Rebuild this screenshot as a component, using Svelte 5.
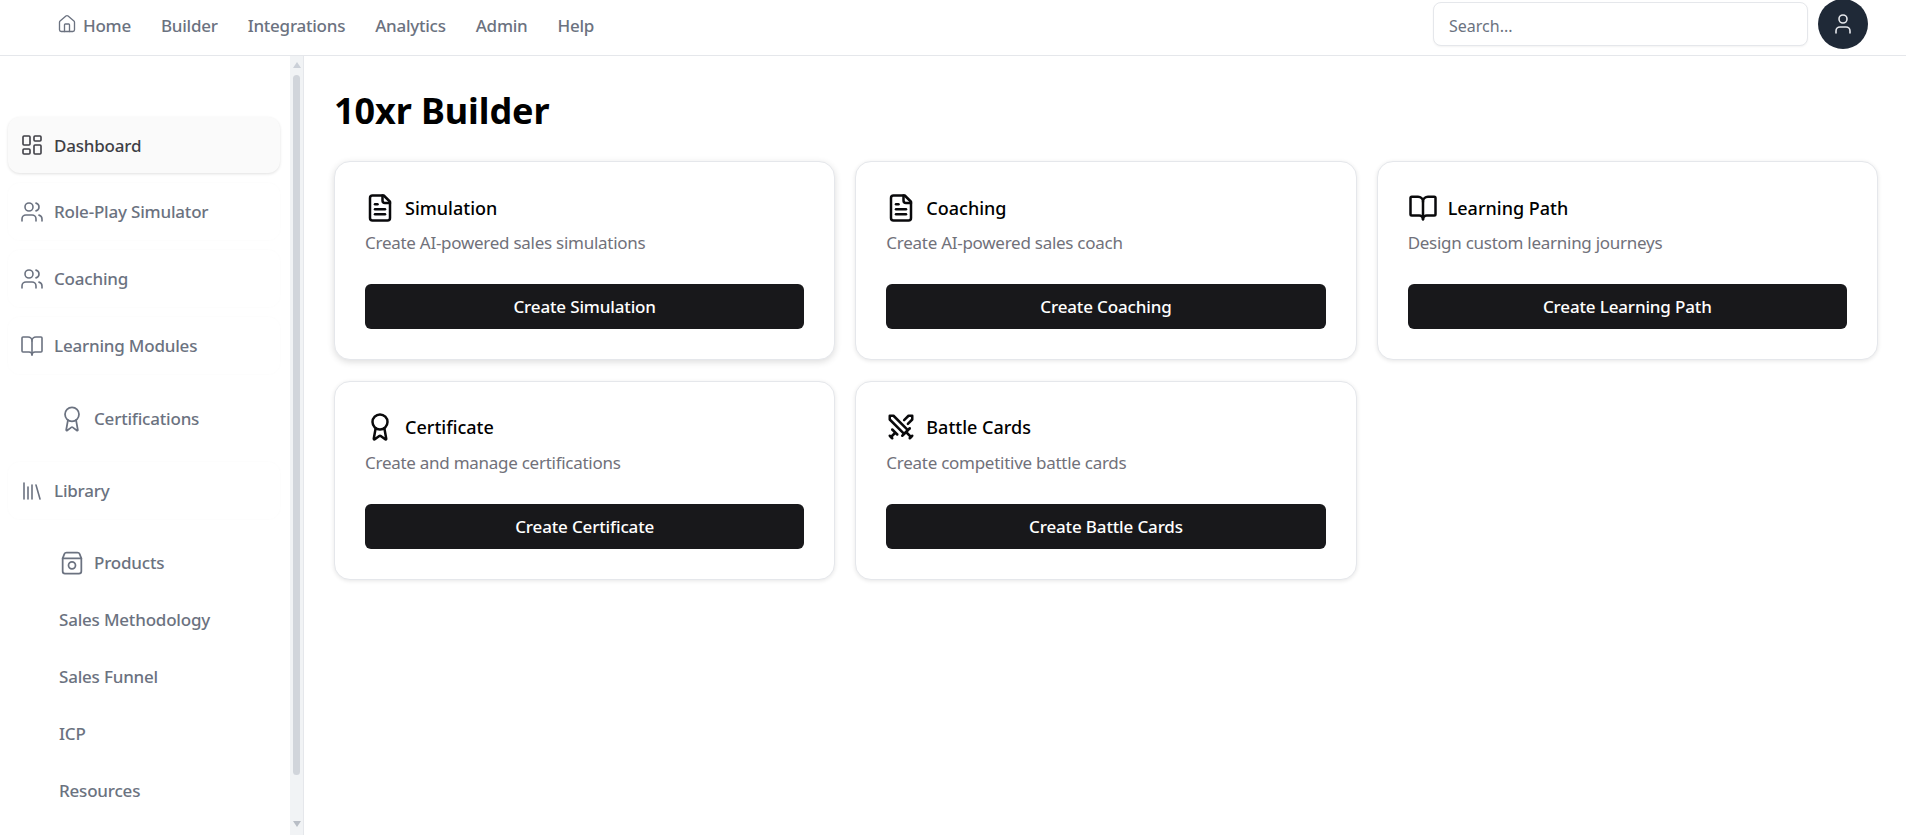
<script>
  const icons = {
    home: ['M15 21v-8a1 1 0 0 0-1-1h-4a1 1 0 0 0-1 1v8', 'M3 10a2 2 0 0 1 .709-1.528l7-5.999a2 2 0 0 1 2.582 0l7 5.999A2 2 0 0 1 21 10v9a2 2 0 0 1-2 2H5a2 2 0 0 1-2-2z'],
    user: ['M19 21v-2a4 4 0 0 0-4-4H9a4 4 0 0 0-4 4v2', 'M16 7a4 4 0 1 1-8 0 4 4 0 0 1 8 0z'],
    dashboard: ['M4 3h5a1 1 0 0 1 1 1v7a1 1 0 0 1-1 1H4a1 1 0 0 1-1-1V4a1 1 0 0 1 1-1z', 'M15 3h5a1 1 0 0 1 1 1v3a1 1 0 0 1-1 1h-5a1 1 0 0 1-1-1V4a1 1 0 0 1 1-1z', 'M15 12h5a1 1 0 0 1 1 1v7a1 1 0 0 1-1 1h-5a1 1 0 0 1-1-1v-7a1 1 0 0 1 1-1z', 'M4 16h5a1 1 0 0 1 1 1v3a1 1 0 0 1-1 1H4a1 1 0 0 1-1-1v-3a1 1 0 0 1 1-1z'],
    users: ['M16 21v-2a4 4 0 0 0-4-4H6a4 4 0 0 0-4 4v2', 'M13 7a4 4 0 1 1-8 0 4 4 0 0 1 8 0z', 'M22 21v-2a4 4 0 0 0-3-3.87', 'M16 3.13a4 4 0 0 1 0 7.75'],
    book: ['M12 7v14', 'M3 18a1 1 0 0 1-1-1V4a1 1 0 0 1 1-1h5a4 4 0 0 1 4 4 4 4 0 0 1 4-4h5a1 1 0 0 1 1 1v13a1 1 0 0 1-1 1h-6a3 3 0 0 0-3 3 3 3 0 0 0-3-3z'],
    award: ['m15.477 12.89 1.515 8.526a.5.5 0 0 1-.81.47l-3.58-2.687a1 1 0 0 0-1.197 0l-3.586 2.686a.5.5 0 0 1-.81-.469l1.514-8.526', 'M18 8a6 6 0 1 1-12 0 6 6 0 0 1 12 0z'],
    library: ['m16 6 4 14', 'M12 6v14', 'M8 8v12', 'M4 4v16'],
    box: ['M4 8l1.4-3.6A2.2 2.2 0 0 1 7.4 3h9.2a2.2 2.2 0 0 1 2 1.4L20 8v11a2 2 0 0 1-2 2H6a2 2 0 0 1-2-2z', 'M4 8h16', 'M15 14a3 3 0 1 1-6 0 3 3 0 0 1 6 0z'],
    file: ['M15 2H6a2 2 0 0 0-2 2v16a2 2 0 0 0 2 2h12a2 2 0 0 0 2-2V7z', 'M14 2v4a2 2 0 0 0 2 2h4', 'M10 9H8', 'M16 13H8', 'M16 17H8'],
    swords: ['M14.5 17.5 3 6V3h3l11.5 11.5', 'm13 19 6-6', 'm16 16 4 4', 'm19 21 2-2', 'M14.5 6.5 18 3h3v3l-3.5 3.5', 'm5 14 4 4', 'm7 17-3 3', 'm3 19 2 2']
  };

  const sideGroups = [
    { label: 'Dashboard', icon: 'dashboard', kind: 'card active' },
    { label: 'Role-Play Simulator', icon: 'users', kind: 'card' },
    { label: 'Coaching', icon: 'users', kind: 'card' },
    { label: 'Learning Modules', icon: 'book', kind: 'card' },
    { label: 'Certifications', icon: 'award', kind: 'sub' },
    { label: 'Library', icon: 'library', kind: 'card' },
    { label: 'Products', icon: 'box', kind: 'sub' },
    { label: 'Sales Methodology', kind: 'plain' },
    { label: 'Sales Funnel', kind: 'plain' },
    { label: 'ICP', kind: 'plain' },
    { label: 'Resources', kind: 'plain' }
  ];

  const cards = [
    { title: 'Simulation', desc: 'Create AI-powered sales simulations', btn: 'Create Simulation', icon: 'file', hover: true },
    { title: 'Coaching', desc: 'Create AI-powered sales coach', btn: 'Create Coaching', icon: 'file' },
    { title: 'Learning Path', desc: 'Design custom learning journeys', btn: 'Create Learning Path', icon: 'book' },
    { title: 'Certificate', desc: 'Create and manage certifications', btn: 'Create Certificate', icon: 'award' },
    { title: 'Battle Cards', desc: 'Create competitive battle cards', btn: 'Create Battle Cards', icon: 'swords' }
  ];
</script>

{#snippet icon(name, cls)}
  <svg class={cls} viewBox="0 0 24 24" fill="none" stroke="currentColor" stroke-width="2" stroke-linecap="round" stroke-linejoin="round">
    {#each icons[name] as d}<path {d} />{/each}
  </svg>
{/snippet}

<div class="page">
  <header class="top">
    <nav class="topnav">
      <a class="toplink">{@render icon('home', 'homeicon')}Home</a>
      <a class="toplink">Builder</a>
      <a class="toplink">Integrations</a>
      <a class="toplink">Analytics</a>
      <a class="toplink">Admin</a>
      <a class="toplink">Help</a>
    </nav>
    <div class="topright">
      <input class="search" placeholder="Search..." />
      <div class="avatar">{@render icon('user', 'usericon')}</div>
    </div>
  </header>

  <div class="body">
    <aside class="side">
      <div class="sidenav">
        {#each sideGroups as item}
          <div class="item {item.kind}">
            {#if item.icon}{@render icon(item.icon, 'sideicon')}{/if}
            <span>{item.label}</span>
          </div>
        {/each}
      </div>
      <div class="scrollbar">
        <div class="arrow up"></div>
        <div class="thumb"></div>
        <div class="arrow down"></div>
      </div>
    </aside>

    <main class="main">
      <h1>10xr Builder</h1>
      <div class="grid">
        {#each cards as c}
          <section class="tile" class:hover={c.hover}>
            <div class="tilehead">
              {@render icon(c.icon, 'tileicon')}
              <h2>{c.title}</h2>
            </div>
            <p>{c.desc}</p>
            <button>{c.btn}</button>
          </section>
        {/each}
      </div>
    </main>
  </div>
</div>

<style>
  :global(body) {
    margin: 0;
    background: #fff;
    overflow: hidden;
    font-family: "Noto Sans", "Open Sans", sans-serif;
  }
  .page { height: 835px; display: flex; flex-direction: column; overflow: hidden; }

  .top {
    height: 56px;
    box-sizing: border-box;
    flex: none;
    border-bottom: 1px solid #e5e7eb;
    display: flex;
    justify-content: space-between;
    align-items: center;
    padding: 0 38px 7px 57px;
  }
  .topnav { display: flex; gap: 30px; align-items: center; margin-top: 2px; }
  .toplink {
    display: flex;
    align-items: center;
    gap: 6px;
    font-size: 17px;
    font-weight: 500;
    letter-spacing: -0.25px;
    color: #6b7280;
  }
  .homeicon { width: 20px; height: 20px; stroke-width: 1.6; margin-top: -3px; }
  .topright { display: flex; align-items: center; gap: 10px; }
  .search {
    width: 375px;
    height: 44px;
    box-sizing: border-box;
    border: 1px solid #e5e7eb;
    border-radius: 8px;
    padding: 3px 15px 0;
    font: 400 16px "Noto Sans", sans-serif;
    box-shadow: 0 1px 2px rgba(0,0,0,.05);
    outline: none;
  }
  .search::placeholder { color: #6b7280; opacity: 1; }
  .avatar {
    width: 50px;
    height: 50px;
    border-radius: 50%;
    background: #1f2937;
    color: #e5e7eb;
    display: flex;
    align-items: center;
    justify-content: center;
  }
  .usericon { width: 24px; height: 24px; stroke-width: 1.6; }

  .body { flex: 1; display: flex; min-height: 0; }
  .side {
    width: 303px;
    flex: none;
    border-right: 1px solid #e5e7eb;
    display: flex;
  }
  .sidenav { flex: 1; padding: 61px 10px 0 8px; overflow: hidden; }
  .item {
    display: flex;
    align-items: center;
    font-size: 17px;
    font-weight: 500;
    letter-spacing: -0.2px;
    color: #6b7280;
    white-space: nowrap;
  }
  .sideicon { width: 24px; height: 24px; stroke-width: 1.6; flex: none; }
  .card {
    height: 57px;
    box-sizing: border-box;
    margin-bottom: 10px;
    padding-left: 12px;
    gap: 10px;
    border-radius: 12px;
    box-shadow: 0 0 3px rgba(0,0,0,.025);
  }
  .active {
    height: 56px;
    background: #fafafa;
    color: #3f3f46;
    box-shadow: 0 1px 3px rgba(0,0,0,.12);
  }
  .sub { height: 57px; padding-left: 49.5px; gap: 8.5px; margin: 16px 0 15px; }
  .sub .sideicon { width: 28px; height: 28px; stroke-width: 1.5; }
  .item.sub:has(+ .plain) { margin: 15px 0 0; }
  .plain { height: 57px; padding-left: 51px; }

  .scrollbar {
    width: 13px;
    flex: none;
    background: #f1f3f5;
    display: flex;
    flex-direction: column;
    align-items: center;
  }
  .arrow { width: 0; height: 0; border-left: 4px solid transparent; border-right: 4px solid transparent; flex: none; }
  .up { border-bottom: 6px solid #cbd0d8; margin-top: 6px; }
  .down { border-top: 6px solid #b9bec6; margin-top: 46px; }
  .thumb { width: 7px; height: 700px; margin-top: 7px; border-radius: 4px; background: #d1d5db; flex: none; }

  .main { flex: 1; padding: 30px 28px 0 30px; min-width: 0; }
  h1 {
    margin: 0 0 25px;
    font-size: 36px;
    line-height: 50px;
    font-weight: 700;
    letter-spacing: -0.1px;
    color: #000;
  }
  .grid { display: grid; grid-template-columns: repeat(3, 1fr); gap: 20.5px 20px; }
  .tile {
    height: 199px;
    box-sizing: border-box;
    border: 1px solid #e5e7eb;
    border-radius: 16px;
    padding: 30.5px 30px 30px;
    background: #fff;
    box-shadow: 0 1px 4px rgba(0,0,0,.1);
    display: flex;
    flex-direction: column;
  }
  .tile.hover { box-shadow: 0 2px 7px rgba(0,0,0,.14); }
  .tilehead { display: flex; align-items: center; gap: 10px; height: 30px; }
  .tileicon { width: 30px; height: 30px; color: #09090b; flex: none; }
  h2 { margin: 0; font-size: 18px; font-weight: 500; color: #000; }
  p { margin: 8.5px 0 0; font-size: 17px; line-height: 24px; letter-spacing: -0.27px; color: #71717a; }
  button {
    margin-top: auto;
    height: 45px;
    border: none;
    border-radius: 6px;
    background: #18181b;
    color: #fff;
    font: 500 17px "Noto Sans", sans-serif;
    letter-spacing: -0.15px;
  }
</style>
